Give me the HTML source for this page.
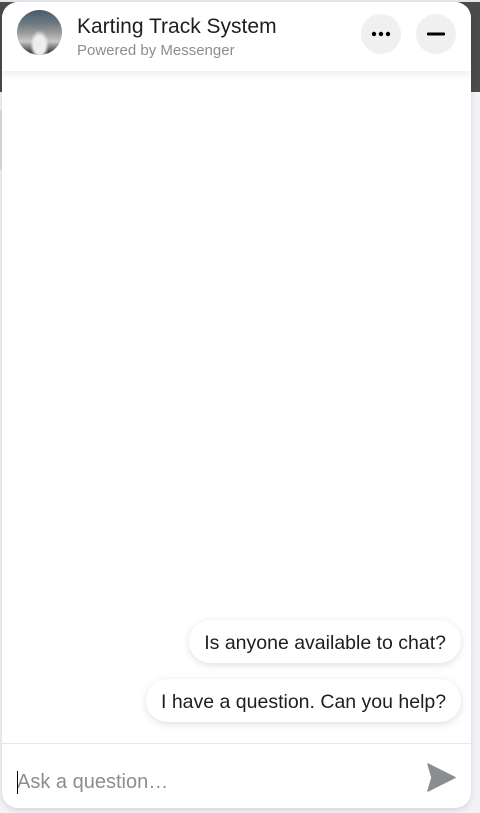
<!DOCTYPE html>
<html><head><meta charset="utf-8"><style>
body{margin:0;width:480px;height:813px;position:relative;overflow:hidden;background:#f0f2f5;font-family:"Liberation Sans",sans-serif}
.dark{position:absolute;left:0;top:0;width:480px;height:92px;background:#4b4b4b}
.topstrip{position:absolute;left:0;top:0;width:480px;height:2px;background:#e4e6eb}
.lg{position:absolute;left:0;top:110px;width:2px;height:60px;background:#dadde1}
.panel{position:absolute;left:2px;top:2px;width:469px;height:806px;background:#fff;border-radius:16px;overflow:hidden;box-shadow:0 2px 6px rgba(0,0,0,.12)}
.hdr{position:absolute;left:0;top:0;width:469px;height:69px;background:#fff;box-shadow:0 3px 8px rgba(0,0,0,.08);z-index:2}
.av{position:absolute;left:15px;top:8px;width:45px;height:45px;border-radius:50%;background:radial-gradient(ellipse at 50% 78%,#eee 0 18%,transparent 30%),linear-gradient(180deg,#4a5a6a 0%,#6a7a80 30%,#9a9a98 50%,#c8c8c8 70%,#555 90%,#222 100%)}
.t{position:absolute;left:75px;top:13px;font-size:21px;color:#1c1e21}
.s{position:absolute;left:75px;top:40px;font-size:15px;color:#8a8d91}
.btn{position:absolute;top:12px;width:40px;height:40px;border-radius:50%;background:#f0f0f0}
.chip{position:absolute;right:10px;height:43px;border-radius:22px;background:#fff;box-shadow:0 2px 8px rgba(0,0,0,.13);font-size:19.5px;color:#1c1e21;line-height:47px;padding:0 15px;box-sizing:border-box;text-align:right;white-space:nowrap}
.div{position:absolute;left:0;top:741px;width:469px;height:1px;background:#e6e6e6}
.ph{position:absolute;left:15px;top:769px;font-size:20px;color:#8a8d91}
.cur{position:absolute;left:15px;top:769px;width:1px;height:23px;background:#000}
</style></head><body>
<div class="dark"></div><div class="topstrip"></div><div class="lg"></div>
<div class="panel">
 <div class="hdr">
  <div class="av"></div>
  <div class="t">Karting Track System</div>
  <div class="s">Powered by Messenger</div>
  <div class="btn" style="left:359px"><svg width="40" height="40"><circle cx="13" cy="20" r="2.2"/><circle cx="20" cy="20" r="2.2"/><circle cx="27" cy="20" r="2.2"/></svg></div>
  <div class="btn" style="left:414px"><svg width="40" height="40"><rect x="11" y="18.5" width="18" height="3" rx="1"/></svg></div>
 </div>
 <div class="chip" style="top:618px;width:272px">Is anyone available to chat?</div>
 <div class="chip" style="top:677px;width:315px">I have a question. Can you help?</div>
 <div class="div"></div>
 <div class="ph">Ask a question…</div>
 <div class="cur"></div>
 <svg style="position:absolute;left:420px;top:757px" width="40" height="40"><path d="M6 5 L33 18.5 L6 32 L10 18.5 Z" fill="#8a8d91" stroke="#8a8d91" stroke-width="1.5" stroke-linejoin="round"/></svg>
</div>
</body></html>
